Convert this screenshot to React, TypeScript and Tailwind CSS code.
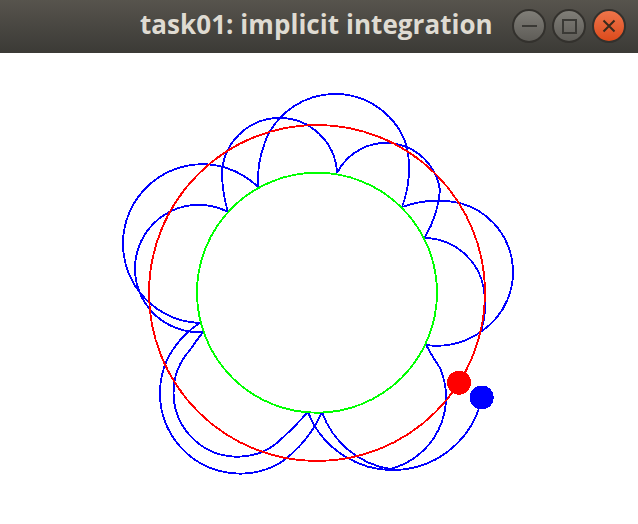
type Point = [number, number];

// each chain is start, via, end, via, end ... and every piece is a circular arc
const chains: Point[][] = [
  [[482,397],[391,470],[308,412]],
  [[426,345],[433,357],[440,368],[446,400],[390,469],[355,455],[322,412]],
  [[308,412],[293,428],[277,443],[187,432],[190,350],[197,340],[203,332]],
  [[322,412],[304,441],[280,463],[160,395],[177,344],[188,332],[200,323]],
  [[203,332],[135,267],[228,212]],
  [[200,323],[123,244],[258,187]],
  [[228,212],[224,195],[222,175],[278,118],[337,173]],
  [[258,187],[259,165],[265,142],[337,94],[407,147],[409,170],[402,207]],
  [[337,173],[388,143],[440,190],[435,215],[425,237]],
  [[426,345],[460,342],[482,331],[513,272],[460,203],[430,201],[402,207]],
  [[425,238],[460,250],[484,290],[485,310],[481,331]],
];

function arcTo(a: Point, b: Point, c: Point) {
  const d = 2 * (a[0] * (b[1] - c[1]) + b[0] * (c[1] - a[1]) + c[0] * (a[1] - b[1]));
  const sa = a[0] * a[0] + a[1] * a[1];
  const sb = b[0] * b[0] + b[1] * b[1];
  const sc = c[0] * c[0] + c[1] * c[1];
  const ux = (sa * (b[1] - c[1]) + sb * (c[1] - a[1]) + sc * (a[1] - b[1])) / d;
  const uy = (sa * (c[0] - b[0]) + sb * (a[0] - c[0]) + sc * (b[0] - a[0])) / d;
  const r = Math.hypot(a[0] - ux, a[1] - uy);
  const sweep = d > 0 ? 1 : 0;
  // via point on the same side as the centre means the long way round
  const cross = (c[0] - a[0]) * (uy - a[1]) - (c[1] - a[1]) * (ux - a[0]);
  const crossVia = (c[0] - a[0]) * (b[1] - a[1]) - (c[1] - a[1]) * (b[0] - a[0]);
  const large = cross * crossVia > 0 ? 1 : 0;
  return `A${r} ${r} 0 ${large} ${sweep} ${c[0]} ${c[1]}`;
}

function chainPath(pts: Point[]) {
  let path = `M${pts[0][0]} ${pts[0][1]}`;
  for (let i = 0; i + 2 < pts.length; i += 2) {
    path += arcTo(pts[i], pts[i + 1], pts[i + 2]);
  }
  return path;
}

function WindowButton({ close, children }: { close?: boolean; children: React.ReactNode }) {
  return (
    <div
      className={
        close
          ? 'flex h-[34px] w-[34px] items-center justify-center rounded-full border-2 border-[#33312d] bg-gradient-to-b from-[#ee7449] to-[#dc4a19]'
          : 'flex h-[34px] w-[34px] items-center justify-center rounded-full border-2 border-[#33312d] bg-gradient-to-b from-[#807e78] to-[#5e5c57]'
      }
    >
      {children}
    </div>
  );
}

export default function App() {
  return (
    <div className="h-[524px] w-[638px] overflow-hidden bg-white">
      <div className="flex h-[53px] items-center bg-gradient-to-b from-[#57544d] to-[#3b3a36] pr-[12px] pl-[140px]">
        <span className="flex-1 pb-[4px] font-['Open_Sans',sans-serif] text-[26px] font-bold tracking-[0.05px] whitespace-nowrap text-[#dfdbd2]">
          task01: implicit integration
        </span>
        <div className="flex items-center gap-[6px] pb-[1px]">
          <WindowButton>
            <div className="h-[2px] w-[15px] bg-[#3a3935]" />
          </WindowButton>
          <WindowButton>
            <div className="h-[15px] w-[15px] border-2 border-[#3a3935]" />
          </WindowButton>
          <WindowButton close>
            <svg width="14" height="14" viewBox="0 0 14 14">
              <path d="M1.5 1.5L12.5 12.5M12.5 1.5L1.5 12.5" stroke="#3a2a1c" strokeWidth="2" fill="none" />
            </svg>
          </WindowButton>
        </div>
      </div>
      <svg width="638" height="471" viewBox="0 53 638 471" className="block" shapeRendering="crispEdges">
        {chains.map((chain, i) => (
          <path key={i} d={chainPath(chain)} fill="none" stroke="#0000ff" strokeWidth="1.85" />
        ))}
        <circle cx="317" cy="293" r="168" fill="none" stroke="#ff0000" strokeWidth="1.85" />
        <circle cx="317" cy="292.7" r="120" fill="none" stroke="#00ff00" strokeWidth="1.85" />
        <circle cx="459" cy="382.7" r="12" fill="#ff0000" />
        <circle cx="481.7" cy="397.5" r="12" fill="#0000ff" />
      </svg>
    </div>
  );
}
